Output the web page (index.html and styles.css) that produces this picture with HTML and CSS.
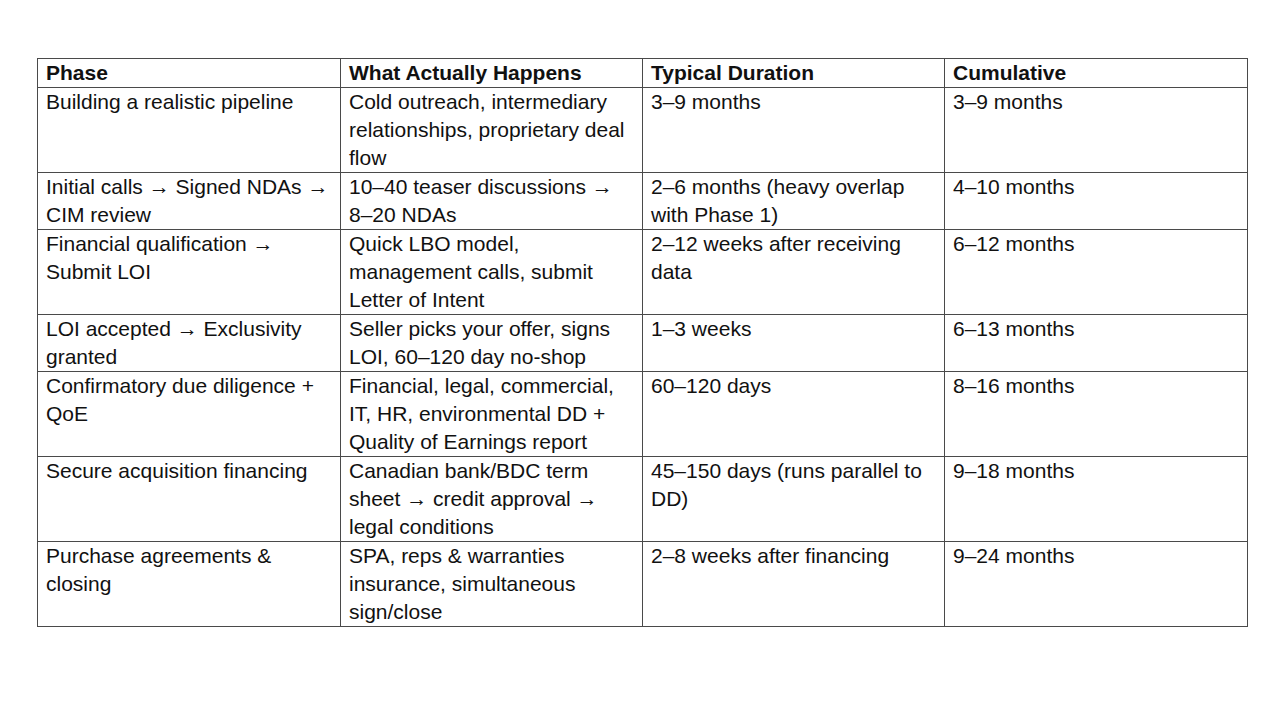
FILE: index.html
```html
<!DOCTYPE html>
<html>
<head>
<meta charset="utf-8">
<link rel="stylesheet" href="styles.css">
</head>
<body>
<table class="timeline">
  <colgroup>
    <col class="c1"><col class="c2"><col class="c3"><col class="c4">
  </colgroup>
  <thead>
    <tr><th>Phase</th><th>What Actually Happens</th><th>Typical Duration</th><th>Cumulative</th></tr>
  </thead>
  <tbody>
    <tr><td>Building a realistic pipeline</td><td>Cold outreach, intermediary relationships, proprietary deal flow</td><td>3–9 months</td><td>3–9 months</td></tr>
    <tr><td>Initial calls → Signed NDAs → CIM review</td><td>10–40 teaser discussions → 8–20 NDAs</td><td>2–6 months (heavy overlap with Phase 1)</td><td>4–10 months</td></tr>
    <tr><td>Financial qualification → Submit LOI</td><td>Quick LBO model, management calls, submit Letter of Intent</td><td>2–12 weeks after receiving data</td><td>6–12 months</td></tr>
    <tr><td>LOI accepted → Exclusivity granted</td><td>Seller picks your offer, signs LOI, 60–120 day no-shop</td><td>1–3 weeks</td><td>6–13 months</td></tr>
    <tr><td>Confirmatory due diligence + QoE</td><td>Financial, legal, commercial, IT, HR, environmental DD + Quality of Earnings report</td><td>60–120 days</td><td>8–16 months</td></tr>
    <tr><td>Secure acquisition financing</td><td>Canadian bank/BDC term sheet → credit approval → legal conditions</td><td>45–150 days (runs parallel to DD)</td><td>9–18 months</td></tr>
    <tr><td>Purchase agreements &amp; closing</td><td>SPA, reps &amp; warranties insurance, simultaneous sign/close</td><td>2–8 weeks after financing</td><td>9–24 months</td></tr>
  </tbody>
</table>
</body>
</html>
```

FILE: styles.css
```css
html, body {
  margin: 0;
  padding: 0;
  background: #ffffff;
}
body {
  padding: 58px 0 0 37px;
  font-family: "Liberation Sans", Arial, sans-serif;
  color: #111111;
}
.timeline {
  border-collapse: collapse;
  table-layout: fixed;
  width: 1211px;
}
.c1 { width: 303px; }
.c2 { width: 302px; }
.c3 { width: 302px; }
.c4 { width: 303px; }
.timeline th,
.timeline td {
  border: 1px solid #4a4a4a;
  padding: 0 4px 0 8px;
  font-size: 21px;
  line-height: 28px;
  text-align: left;
  vertical-align: top;
}
.timeline th {
  font-weight: bold;
}
```
